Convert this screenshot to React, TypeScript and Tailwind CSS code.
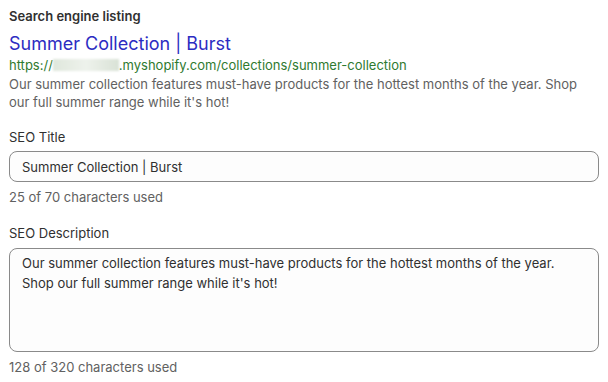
export default function App() {
  const title = "Summer Collection | Burst";
  const description =
    "Our summer collection features must-have products for the hottest months of the year. Shop our full summer range while it's hot!";

  return (
    <div
      className="min-h-screen w-[608px] bg-white px-[9px] pt-[6px] text-[13px] text-[#303030]"
      style={{ fontFamily: "Inter, 'Noto Sans', sans-serif" }}
    >
      <h2 className="h-5 font-semibold leading-5 text-[#303030]">Search engine listing</h2>

      {/* Search preview */}
      <div className="mt-[6px]">
        <div className="text-[18px] leading-6 text-[#2c2cc2]">{title}</div>
        <div className="flex items-center text-[13px] leading-[18px] text-[#2f7a2f]">
          <span>https://</span>
          <span className="inline-block h-[12px] w-[66px] bg-gradient-to-r from-[#dfe7dc] via-[#eef2ec] to-[#d9e2d6] blur-[1px]" />
          <span>.myshopify.com/collections/summer-collection</span>
        </div>
        <p className="mt-px leading-[18px] text-[#616161]">{description}</p>
      </div>

      {/* SEO title */}
      <label className="mt-4 block leading-5">SEO Title</label>
      <input
        readOnly
        value={title}
        className="mt-1 block h-[31px] w-full rounded-lg border border-[#8a8a8a] bg-[#fdfdfd] px-3 text-[13px] text-[#303030] outline-none"
      />
      <div className="mt-[5px] leading-5 text-[#616161]">25 of 70 characters used</div>

      {/* SEO description */}
      <label className="mt-4 block leading-5">SEO Description</label>
      <textarea
        readOnly
        value={description}
        className="mt-[5px] block h-[104px] w-full resize-none rounded-lg border border-[#8a8a8a] bg-[#fdfdfd] px-3 pt-[4px] text-[13px] leading-5 text-[#303030] outline-none"
      />
      <div className="mt-[5px] leading-5 text-[#616161]">128 of 320 characters used</div>
    </div>
  );
}
